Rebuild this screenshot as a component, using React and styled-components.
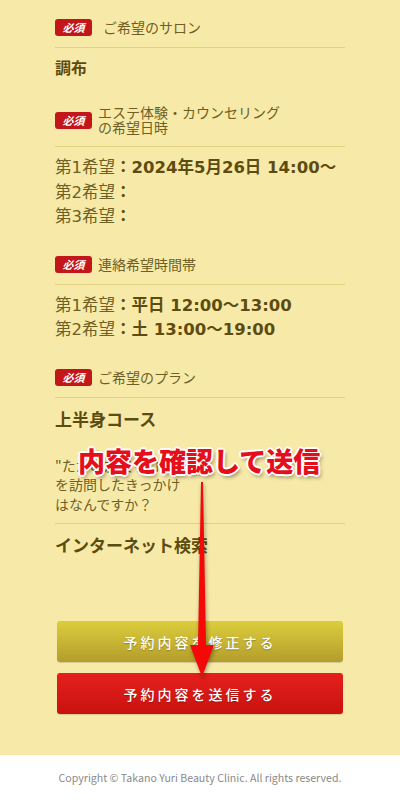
import React from 'react';
import styled, { createGlobalStyle } from 'styled-components';

const GlobalStyle = createGlobalStyle`
  body {
    margin: 0;
    background: #fff;
    font-family: "Noto Sans CJK JP", "Noto Sans", sans-serif;
  }
`;

const Wrapper = styled.div`
  position: relative;
  width: 400px;
`;

const Main = styled.main`
  background: #f7eaa9;
  padding: 19px 55px 41px;
`;

const Field = styled.section`
  & + & {
    margin-top: 26px;
  }
`;

const LabelRow = styled.div`
  display: flex;
  align-items: center;
  padding-bottom: ${(p) => (p.plain ? '9px' : '11px')};
  border-bottom: 1px solid #e2d17f;
`;

const Badge = styled.span`
  flex: none;
  display: flex;
  align-items: center;
  justify-content: center;
  width: 37px;
  height: 17px;
  margin-right: ${(p) => (p.tight ? '6px' : '11px')};
  border-radius: 3px;
  background: #c3161b;
  color: #fff;
  font-size: 11px;
  font-weight: 700;
  font-style: italic;
  line-height: 1;
`;

const Label = styled.div`
  font-size: 14px;
  line-height: ${(p) => (p.plain ? '19.5px' : '15px')};
  color: #6e5f25;
`;

const Value = styled.div`
  margin-top: ${(p) => p.top || 11}px;
  font-family: "DejaVu Sans", "Noto Sans CJK JP", sans-serif;
  font-size: ${(p) => p.size || 16}px;
  line-height: ${(p) => p.lh || 20}px;
  color: #5d4c10;
  font-weight: ${(p) => (p.bold ? 700 : 400)};
`;

const Line = styled.div`
  color: #6e5f25;
  b {
    color: #5d4c10;
    font-weight: 700;
  }
`;

const Buttons = styled.div`
  display: flex;
  flex-direction: column;
  gap: 11px;
  margin: 65px 2px 0;
`;

const Button = styled.button`
  height: 41px;
  border: none;
  border-radius: 3px;
  background: ${(p) =>
    p.primary
      ? 'linear-gradient(#e5201d, #c8120f)'
      : 'linear-gradient(#dccd3c, #b49d2c)'};
  color: #fff;
  font-family: "Noto Sans CJK JP", serif;
  font-size: 14px;
  font-weight: 500;
  letter-spacing: 3px;
  text-shadow: 0 1px 1px rgba(0, 0, 0, 0.25);
  box-shadow: 0 1px 1px rgba(0, 0, 0, 0.15);
`;

const Footer = styled.footer`
  height: 45px;
  display: flex;
  align-items: center;
  justify-content: center;
  font-size: 10.6px;
  color: #8a8a8a;
`;

const Callout = styled.div`
  position: absolute;
  top: 443px;
  left: 78px;
  font-size: 27px;
  font-weight: 900;
  line-height: 36px;
  color: #e50e1a;
  text-shadow: 1px 1px 0 #fff, -1px -1px 0 #fff, 1px -1px 0 #fff,
    -1px 1px 0 #fff, 0 2px 0 #fff, 0 -2px 0 #fff, 2px 0 0 #fff, -2px 0 0 #fff,
    2px 3px 4px rgba(0, 0, 0, 0.45);
`;

const Arrow = styled.svg`
  position: absolute;
  top: 480px;
  left: 186px;
  filter: drop-shadow(1px 2px 2px rgba(0, 0, 0, 0.35));
`;

const App = () => (
  <Wrapper>
    <GlobalStyle />
    <Main>
      <Field>
        <LabelRow>
          <Badge>必須</Badge>
          <Label>ご希望のサロン</Label>
        </LabelRow>
        <Value bold>調布</Value>
      </Field>
      <Field>
        <LabelRow>
          <Badge tight>必須</Badge>
          <Label>
            エステ体験・カウンセリング
            <br />
            の希望日時
          </Label>
        </LabelRow>
        <Value top={9} lh={24.5} size={16.5}>
          <Line>
            第1希望<b>：2024年5月26日 14:00～</b>
          </Line>
          <Line>
            第2希望<b>：</b>
          </Line>
          <Line>
            第3希望<b>：</b>
          </Line>
        </Value>
      </Field>
      <Field>
        <LabelRow>
          <Badge tight>必須</Badge>
          <Label>連絡希望時間帯</Label>
        </LabelRow>
        <Value top={9} lh={24.5} size={16.5}>
          <Line>
            第1希望<b>：平日 12:00～13:00</b>
          </Line>
          <Line>
            第2希望<b>：土 13:00～19:00</b>
          </Line>
        </Value>
      </Field>
      <Field>
        <LabelRow>
          <Badge tight>必須</Badge>
          <Label>ご希望のプラン</Label>
        </LabelRow>
        <Value bold top={12} size={17}>
          上半身コース
        </Value>
      </Field>
      <Field>
        <LabelRow plain>
          <Label plain>
            "たかの友梨サロン"
            <br />
            を訪問したきっかけ
            <br />
            はなんですか？
          </Label>
        </LabelRow>
        <Value bold top={12} size={17}>
          インターネット検索
        </Value>
      </Field>
      <Buttons>
        <Button type="button">予約内容を修正する</Button>
        <Button type="button" primary>
          予約内容を送信する
        </Button>
      </Buttons>
    </Main>
    <Footer>Copyright © Takano Yuri Beauty Clinic. All rights reserved.</Footer>

    <Callout>内容を確認して送信</Callout>
    <Arrow width="32" height="200" viewBox="0 0 32 200">
      <polygon points="15,2 17,2 20,165 28,165 16,197 4,165 12,165" fill="#f40808" />
    </Arrow>
  </Wrapper>
);

export default App;
